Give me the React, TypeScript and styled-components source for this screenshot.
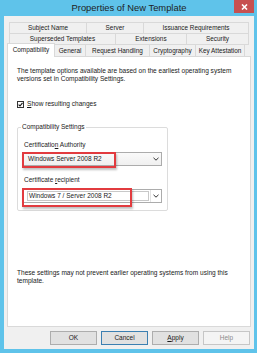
import React from "react";
import styled, { createGlobalStyle } from "styled-components";

const Global = createGlobalStyle`
  html, body { margin: 0; padding: 0; background: #5fc3ea; }
  body {
    width: 257px; height: 353px; overflow: hidden;
    font-family: "Liberation Sans", Arial, sans-serif;
    color: #1a1a1a;
  }
`;

const Window = styled.div`
  width: 257px;
  height: 353px;
  box-sizing: border-box;
  background: #5fc3ea;
  display: flex;
  flex-direction: column;
  padding: 0 3px 4px 4px;
`;

const TitleBar = styled.div`
  height: 16px;
  display: grid;
  grid-template-columns: 1fr auto 1fr;
  align-items: start;
`;

const Title = styled.div`
  grid-column: 2;
  font-size: 9.4px;
  line-height: 15px;
  color: #1e1e1e;
  white-space: nowrap;
`;

const CloseButton = styled.div`
  grid-column: 3;
  justify-self: end;
  width: 20px;
  height: 13px;
  background: #c75050;
  display: flex;
  align-items: center;
  justify-content: center;
`;

const Client = styled.div`
  flex: 1;
  background: #f0f0f0;
  display: flex;
  flex-direction: column;
  padding: 6px 3px 4px 3px;
`;

const TabRow = styled.div<{ $front?: boolean }>`
  display: flex;
  align-items: stretch;
  padding-left: ${(p) => (p.$front ? "0" : "2px")};
  & + & { margin-top: -1px; }
`;

const Tab = styled.div<{ $w: number; $active?: boolean; $front?: boolean }>`
  width: ${(p) => p.$w}px;
  height: ${(p) => (p.$active ? 14 : 12)}px;
  box-sizing: border-box;
  border: 1px solid #d9d9d9;
  border-bottom: ${(p) => (p.$front ? "none" : "1px solid #d9d9d9")};
  background: ${(p) => (p.$active ? "#ffffff" : "#f0f0f0")};
  margin: ${(p) => (p.$active ? "-1px 0 -1px 0" : "0")};
  position: relative;
  z-index: ${(p) => (p.$active ? 2 : 1)};
  display: flex;
  align-items: ${(p) => (p.$active ? "flex-start" : "center")};
  padding-top: ${(p) => (p.$active ? "2px" : "0")};
  justify-content: center;
  font-size: 6.4px;
  line-height: 8px;
  white-space: nowrap;
  & + & { margin-left: -1px; }
`;

const Panel = styled.div`
  height: 271px;
  box-sizing: border-box;
  border: 1px solid #d9d9d9;
  background: #ffffff;
  display: flex;
  flex-direction: column;
  padding: 10px 0 0 9px;
`;

const Text = styled.div<{ $mt?: number }>`
  font-size: 6.55px;
  line-height: 8px;
  margin-top: ${(p) => p.$mt ?? 0}px;
  white-space: nowrap;
`;

const CheckRow = styled.div`
  margin-top: 17px;
  height: 8px;
  display: flex;
  align-items: center;
  gap: 3px;
  font-size: 6.55px;
  line-height: 8px;
`;

const CheckBox = styled.div`
  width: 7px;
  height: 7px;
  box-sizing: border-box;
  border: 1px solid #333333;
  background: #ffffff;
  display: flex;
  align-items: center;
  justify-content: center;
`;

const Group = styled.fieldset`
  margin: 15px 0 0 0;
  padding: 0 5px 7px 5px;
  width: 151px;
  box-sizing: border-box;
  border: 1px solid #dcdcdc;
  border-radius: 2px;
  min-width: 0;
`;

const Legend = styled.legend`
  margin-left: -2px;
  padding: 0 1px;
  font-size: 6.5px;
  line-height: 8px;
`;

const GroupBody = styled.div`
  padding-top: 10px;
  display: flex;
  flex-direction: column;
`;

const FieldLabel = styled.div<{ $mt?: number }>`
  padding-left: 1px;
  font-size: 6.5px;
  line-height: 8px;
  margin-top: ${(p) => p.$mt ?? 0}px;
`;

const Combo = styled.div<{ $mt: number; $editable?: boolean }>`
  position: relative;
  margin-top: ${(p) => p.$mt}px;
  height: 14px;
  box-sizing: border-box;
  border: 1px solid #acacac;
  background: ${(p) => (p.$editable ? "#ffffff" : "linear-gradient(#fafafa, #f0f0f0)")};
  display: flex;
  align-items: center;
  padding-left: ${(p) => (p.$editable ? "3px" : "4px")};
  font-size: 6.5px;
  line-height: 8px;
`;

const ComboText = styled.div`
  flex: 1;
  white-space: nowrap;
`;

const EditField = styled.div`
  flex: 1;
  height: 10px;
  box-sizing: border-box;
  border: 1px solid #c8c8c8;
  display: flex;
  align-items: center;
  padding-left: 1px;
  white-space: nowrap;
`;

const Arrow = styled.div<{ $editable?: boolean }>`
  width: 11px;
  height: 100%;
  display: flex;
  align-items: center;
  justify-content: center;
  box-sizing: border-box;
  border-left: ${(p) => (p.$editable ? "1px solid #e3e3e3" : "none")};
  margin-left: ${(p) => (p.$editable ? "1px" : "0")};
`;

const RedMark = styled.div<{ $l: number; $t: number; $w: number; $h: number }>`
  position: absolute;
  left: ${(p) => p.$l}px;
  top: ${(p) => p.$t}px;
  width: ${(p) => p.$w}px;
  height: ${(p) => p.$h}px;
  box-sizing: border-box;
  border: 2px solid #e23b3f;
  box-shadow: 1px 2px 2px rgba(0, 0, 0, 0.25);
  pointer-events: none;
`;

const ButtonRow = styled.div`
  margin-top: 4px;
  display: flex;
  justify-content: flex-end;
  gap: 4px;
  padding-right: 1px;
`;

const Button = styled.div<{ $focused?: boolean; $disabled?: boolean }>`
  width: 47px;
  height: 14px;
  box-sizing: border-box;
  border: 1px solid ${(p) => (p.$focused ? "#3c7fb1" : p.$disabled ? "#c6c6c6" : "#adadad")};
  background: ${(p) => (p.$disabled ? "#f4f4f4" : "#e1e1e1")};
  color: ${(p) => (p.$disabled ? "#8a8a8a" : "#1a1a1a")};
  display: flex;
  align-items: center;
  justify-content: center;
  font-size: 6.5px;
  line-height: 8px;
`;

const U = styled.span`
  text-decoration: underline;
`;

const Chevron = () => (
  <svg width="6" height="4" viewBox="0 0 6 4">
    <path d="M0.5 0.8 L3 3.2 L5.5 0.8" fill="none" stroke="#333" strokeWidth="1" />
  </svg>
);

export default function App() {
  return (
    <>
      <Global />
      <Window>
        <TitleBar>
          <Title>Properties of New Template</Title>
          <CloseButton>
            <svg width="7" height="6" viewBox="0 0 7 6">
              <path d="M1 0.5 L6 5.5 M6 0.5 L1 5.5" stroke="#fff" strokeWidth="1.6" />
            </svg>
          </CloseButton>
        </TitleBar>
        <Client>
          <TabRow>
            <Tab $w={78}>Subject Name</Tab>
            <Tab $w={58}>Server</Tab>
            <Tab $w={106}>Issuance Requirements</Tab>
          </TabRow>
          <TabRow>
            <Tab $w={107}>Superseded Templates</Tab>
            <Tab $w={72}>Extensions</Tab>
            <Tab $w={63}>Security</Tab>
          </TabRow>
          <TabRow $front>
            <Tab $w={48} $front $active>Compatibility</Tab>
            <Tab $w={32} $front>General</Tab>
            <Tab $w={65} $front>Request Handling</Tab>
            <Tab $w={47} $front>Cryptography</Tab>
            <Tab $w={50} $front>Key Attestation</Tab>
          </TabRow>
          <Panel>
            <Text>
              The template options available are based on the earliest operating system
              <br />
              versions set in Compatibility Settings.
            </Text>
            <CheckRow>
              <CheckBox>
                <svg width="5" height="5" viewBox="0 0 5 5">
                  <path d="M0.6 2.6 L2 4 L4.5 0.8" fill="none" stroke="#111" strokeWidth="1.1" />
                </svg>
              </CheckBox>
              <span>
                <U>S</U>how resulting changes
              </span>
            </CheckRow>
            <Group>
              <Legend>Compatibility Settings</Legend>
              <GroupBody>
                <FieldLabel>
                  Certificatio<U>n</U> Authority
                </FieldLabel>
                <Combo $mt={3}>
                  <ComboText>Windows Server 2008 R2</ComboText>
                  <Arrow>
                    <Chevron />
                  </Arrow>
                  <RedMark $l={-2} $t={-1} $w={94} $h={16} />
                </Combo>
                <FieldLabel $mt={10}>
                  Certificate <U>r</U>ecipient
                </FieldLabel>
                <Combo $mt={5} $editable>
                  <EditField>Windows 7 / Server 2008 R2</EditField>
                  <Arrow $editable>
                    <Chevron />
                  </Arrow>
                  <RedMark $l={-2} $t={-2} $w={110} $h={19} />
                </Combo>
              </GroupBody>
            </Group>
            <Text $mt={58}>
              These settings may not prevent earlier operating systems from using this
              <br />
              template.
            </Text>
          </Panel>
          <ButtonRow>
            <Button>OK</Button>
            <Button $focused>Cancel</Button>
            <Button>
              <U>A</U>pply
            </Button>
            <Button $disabled>Help</Button>
          </ButtonRow>
        </Client>
      </Window>
    </>
  );
}
